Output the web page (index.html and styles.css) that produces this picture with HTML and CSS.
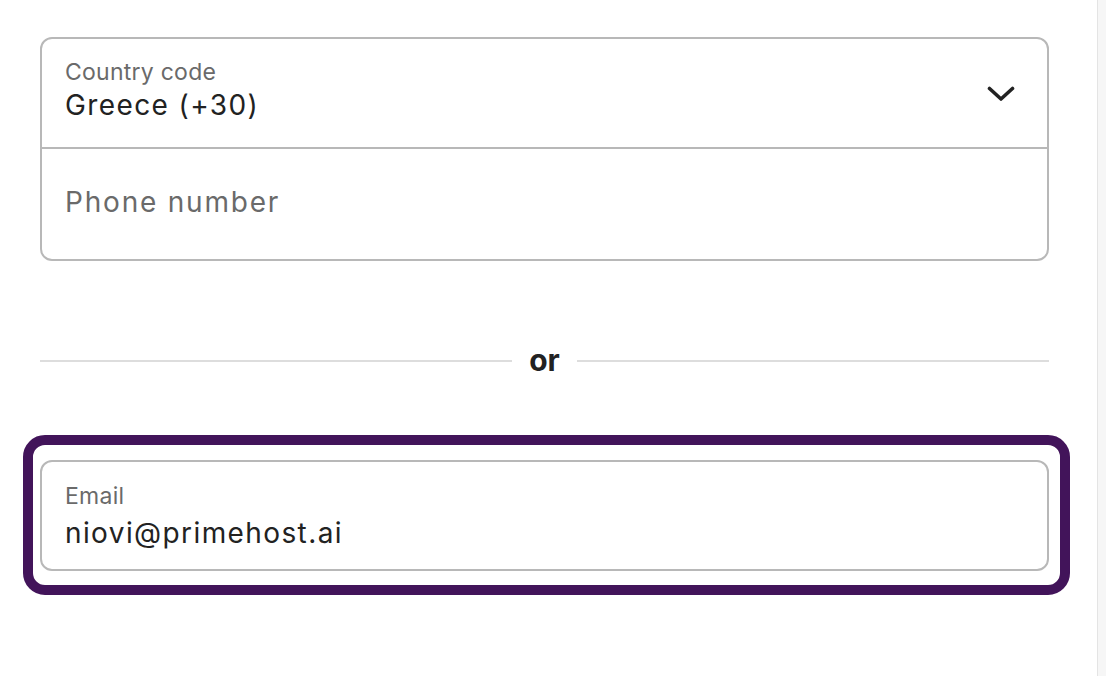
FILE: index.html
```html
<!DOCTYPE html>
<html lang="en">
<head>
<meta charset="utf-8">
<title>Log in or sign up</title>
<link rel="stylesheet" href="styles.css">
</head>
<body>
<div class="page">
  <main class="form">
    <div class="phone-group">
      <div class="field select">
        <div class="field-text">
          <div class="label">Country code</div>
          <div class="value">Greece (+30)</div>
        </div>
        <svg class="chevron" width="28" height="16" viewBox="0 0 28 16" aria-hidden="true">
          <polyline points="2.5,2.5 14,13 25.5,2.5" fill="none" stroke="#222222" stroke-width="3.6" stroke-linecap="round" stroke-linejoin="round"/>
        </svg>
      </div>
      <div class="field phone">
        <div class="placeholder">Phone number</div>
      </div>
    </div>

    <div class="divider">
      <span class="line"></span>
      <span class="or">or</span>
      <span class="line"></span>
    </div>

    <div class="focus-ring">
      <div class="field email">
        <div class="label">Email</div>
        <div class="value email-value">niovi@primehost.ai</div>
      </div>
    </div>
  </main>
  <div class="scrollbar"></div>
</div>
</body>
</html>
```

FILE: styles.css
```css
* {
  box-sizing: border-box;
}

html, body {
  margin: 0;
  padding: 0;
  background: #ffffff;
}

body {
  font-family: Inter, "Noto Sans", "Liberation Sans", sans-serif;
  color: #222222;
}

.page {
  display: flex;
  height: 676px;
  overflow: hidden;
}

.form {
  flex: 1;
  padding: 37px 48px 0 40px;
}

.phone-group {
  border: 2px solid #b8b8b8;
  border-radius: 12px;
}

.field {
  padding: 0 23px;
}

.select {
  display: flex;
  align-items: center;
  height: 110px;
  border-bottom: 2px solid #b8b8b8;
  padding-right: 32px;
}

.field-text {
  flex: 1;
  padding-bottom: 6px;
}

.label {
  font-size: 23px;
  line-height: 26px;
  color: #6a6a6a;
  letter-spacing: 0.25px;
}

.value {
  font-size: 28px;
  line-height: 34px;
  color: #222222;
  margin-top: 3px;
  letter-spacing: 1.4px;
}

.chevron {
  display: block;
  margin-top: 2px;
}

.phone {
  display: flex;
  align-items: center;
  height: 110px;
}

.placeholder {
  font-size: 28px;
  line-height: 34px;
  color: #6a6a6a;
  letter-spacing: 1.8px;
  padding-bottom: 4px;
}

.divider {
  display: flex;
  align-items: center;
  gap: 17px;
  height: 40px;
  margin: 80px 0 54px;
}

.line {
  flex: 1;
  height: 1.5px;
  background: #dddddd;
}

.or {
  font-size: 30px;
  font-weight: 700;
  line-height: 40px;
  color: #222222;
  padding-bottom: 2px;
}

.focus-ring {
  margin: 0 -21px 0 -17px;
  border: 10px solid #42145a;
  border-radius: 22px;
  padding: 15px 11px 14px 7px;
}

.email {
  height: 111px;
  border: 2px solid #b8b8b8;
  border-radius: 12px;
  padding-top: 21px;
}

.email-value {
  margin-top: 7px;
}

.scrollbar {
  width: 9px;
  flex: none;
  background: #f6f6f6;
  border-left: 1px solid #e4e4e4;
}
```
